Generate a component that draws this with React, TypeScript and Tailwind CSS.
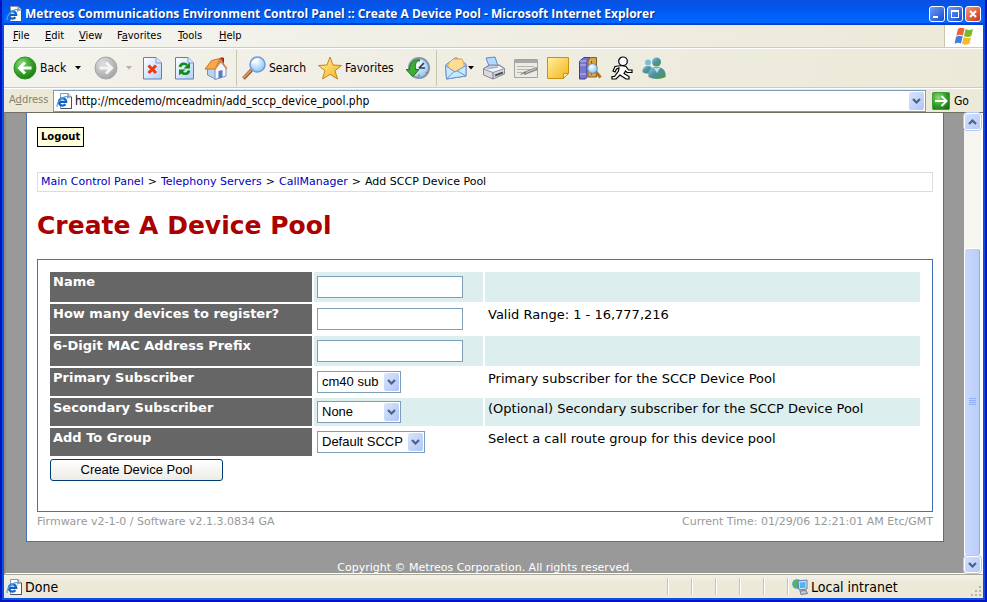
import type { ReactNode } from "react";

function Icon({ children, size = "size-6" }: { children: ReactNode; size?: string }) {
  return (
    <svg viewBox="0 0 24 24" className={`${size} shrink-0`} aria-hidden="true">
      {children}
    </svg>
  );
}

function IePageIcon() {
  return (
    <svg viewBox="0 0 16 16" className="size-4 shrink-0" aria-hidden="true">
      <path d="M4.500 .5H12L15.500 4V15.500H4.500Z" fill="#fffdf0" stroke="#8a98b8" />
      <path d="M12 .5V4H15.500" fill="#d8dff0" stroke="#5c6c94" />
      <path d="M15.500 4V15.500H4.500" fill="none" stroke="#48506c" />
      <path d="M2.800 8.800H10.200A3.700 3.700 0 1 0 9.400 11.300" fill="none" stroke="#1560c8" strokeWidth="2.200" />
      <path d="M1.500 14C-.5 11.500 5 4.500 9.500 3.600C11.500 3.200 12 4.200 11.500 5.500" fill="none" stroke="#49a4ee" strokeWidth="1.200" />
    </svg>
  );
}

function Caret({ color = "#000" }: { color?: string }) {
  return (
    <svg viewBox="0 0 6 4" className="h-1 w-1.5 shrink-0" aria-hidden="true">
      <path d="M0 0H6L3 3.500Z" fill={color} />
    </svg>
  );
}

function Chevron({ up = false }: { up?: boolean }) {
  return (
    <svg viewBox="0 0 9 6" className="h-1.5 w-[9px]" aria-hidden="true">
      <path d={up ? "M1 5L4.500 1.500L8 5" : "M1 1L4.500 4.500L8 1"} fill="none" stroke="#4d6185" strokeWidth="2.200" />
    </svg>
  );
}

const iconGradients = (
  <defs>
    <linearGradient id="page" x1="0" y1="0" x2="1" y2="1">
      <stop offset="0" stopColor="#fff" />
      <stop offset="1" stopColor="#b4d0f8" />
    </linearGradient>
    <radialGradient id="green" cx=".35" cy=".3" r=".8">
      <stop offset="0" stopColor="#8edb78" />
      <stop offset=".5" stopColor="#3aa82c" />
      <stop offset="1" stopColor="#16720f" />
    </radialGradient>
    <radialGradient id="grey" cx=".35" cy=".3" r=".8">
      <stop offset="0" stopColor="#dedede" />
      <stop offset="1" stopColor="#a0a0a0" />
    </radialGradient>
    <radialGradient id="lens" cx=".4" cy=".3" r=".8">
      <stop offset="0" stopColor="#fff" />
      <stop offset="1" stopColor="#7cbcf2" />
    </radialGradient>
    <linearGradient id="gold" x1="0" y1="0" x2="1" y2="1">
      <stop offset="0" stopColor="#fff29a" />
      <stop offset="1" stopColor="#f5b21c" />
    </linearGradient>
    <linearGradient id="people" x1="0" y1="0" x2="1" y2="1">
      <stop offset="0" stopColor="#8cc4e8" />
      <stop offset=".5" stopColor="#4d8f9c" />
      <stop offset="1" stopColor="#4b9c3c" />
    </linearGradient>
  </defs>
);

const toolbarArt: Record<string, ReactNode> = {
  back: (
    <>
      <circle cx="12" cy="12" r="11" fill="url(#green)" stroke="#2f8f28" />
      <path d="M18.500 12H7M12 6.500L6.500 12L12 17.500" fill="none" stroke="#fff" strokeWidth="3" />
    </>
  ),
  forward: (
    <>
      <circle cx="12" cy="12" r="11" fill="url(#grey)" stroke="#a6a6a6" />
      <path d="M5.500 12H17M12 6.500L17.500 12L12 17.500" fill="none" stroke="#f4f4f4" strokeWidth="3" />
    </>
  ),
  stop: (
    <>
      <path d="M3.500 1.500H16L21.500 7V23H3.500Z" fill="url(#page)" stroke="#5d7fc0" />
      <path d="M16 1.500V7H21.500" fill="#dce8fb" stroke="#7d9ad0" />
      <path d="M8.500 9.500L16 17M16 9.500L8.500 17" stroke="#ee3a10" strokeWidth="3" />
    </>
  ),
  refresh: (
    <>
      <path d="M3.500 1.500H16L21.500 7V23H3.500Z" fill="url(#page)" stroke="#5d7fc0" />
      <path d="M16 1.500V7H21.500" fill="#dce8fb" stroke="#7d9ad0" />
      <path d="M8 11C8.500 7.500 13 6.800 15 9.200M17 14.500C16.500 18 12 18.800 9.800 16.300" fill="none" stroke="#128a1a" strokeWidth="2.600" />
      <path d="M18 6.500V12.500H11.500ZM7 19.500V13.500H13.500Z" fill="#128a1a" />
    </>
  ),
  home: (
    <>
      <path d="M16.500 2H19.500V8H16.500Z" fill="#b83a22" stroke="#84301e" />
      <path d="M3.500 12L12 11V23.500L3.500 19Z" fill="#b8d2f4" stroke="#7490c4" />
      <path d="M11 13L17 6L22 12.500V20L11 23.500Z" fill="#f2f7ff" stroke="#7891c4" />
      <path d="M14.500 15L18.500 14V21.500L14.500 22.500Z" fill="#5c7cb8" />
      <path d="M1 13L7.500 4.500L16 2.500L11 13Z" fill="#f8a94c" stroke="#cc7424" />
      <path d="M11 13.500L16.500 4L23 13" fill="none" stroke="#e8873a" strokeWidth="1.500" />
    </>
  ),
  search: (
    <>
      <path d="M1.500 22.500L9.500 14" stroke="#8b4d20" strokeWidth="3.600" />
      <path d="M1.500 22L9 14" stroke="#dc9460" strokeWidth="2" />
      <circle cx="15.500" cy="8.500" r="7.500" fill="url(#lens)" stroke="#6b9cda" strokeWidth="1.500" />
      <path d="M10.500 7.500C11.500 4.500 14.500 3 17 3.500" fill="none" stroke="#fff" strokeWidth="1.800" />
    </>
  ),
  favorites: (
    <path d="M12 1L15 9L23.500 9.500L17 14.700L19.500 23L12 18.300L4.500 23L7 14.700L.5 9.500L9 9Z" fill="url(#gold)" stroke="#c9831c" strokeLinejoin="round" />
  ),
  history: (
    <>
      <circle cx="13" cy="12" r="10" fill="url(#lens)" stroke="#8096ac" strokeWidth="2" />
      <path d="M13 12L18 7M13 12H19" stroke="#2c3c54" strokeWidth="1.600" />
      <path d="M13 3.500V5.500M13 18.500V20.500M20 16L21 17" stroke="#e45a38" strokeWidth="1.600" />
      <path d="M0 13.500H3.500C3.500 6.500 9 2.500 14 4C9.500 5.500 9 9 9.500 13.500H13L6.800 20.500Z" fill="#3cae34" stroke="#1c7a1c" />
    </>
  ),
  mail: (
    <>
      <path d="M1.500 9L12 1.500L22 8V20L2.500 23Z" fill="#bccff0" stroke="#7489c8" />
      <path d="M4 8L9 3H18L20 8V12L11 16L4 12Z" fill="#ffdc94" stroke="#dda648" />
      <path d="M1.500 9.500L11 16L22 9.500V20L2.500 23Z" fill="#c6eaff" stroke="#6a93d0" />
      <path d="M2.500 23L10 15.500M22 20L13 14.800" stroke="#6a93d0" />
    </>
  ),
  print: (
    <>
      <path d="M4 2L13 1L16 10H7Z" fill="#b5d8ff" stroke="#5a88d2" />
      <path d="M1.500 12.500L7 9H17.500L22.500 12.500V18L11 23L1.500 19Z" fill="#d9d9df" stroke="#878791" />
      <path d="M1.500 13L11 16.500L22.500 12.500L17 9.500L7 10Z" fill="#f6f6f8" stroke="#92929b" />
      <path d="M11 16.500V23" stroke="#777" />
      <path d="M13 19.500L21 16.500" stroke="#4f545b" strokeWidth="2" />
      <path d="M5 12.500L16 11" stroke="#8cb5ea" strokeWidth="1.500" />
    </>
  ),
  edit: (
    <>
      <path d="M.5 3.500H23.500V21.500H.5Z" fill="#eceae2" stroke="#a4a4a2" />
      <path d="M1 4H23V7H1Z" fill="#a8a8a8" />
      <path d="M3 10.500H20M3 13.500H16M3 16.500H12" stroke="#b5b5b1" />
      <path d="M10 17.500L23 12.500" stroke="#868686" strokeWidth="3" />
      <path d="M12 16.500L22 12.700" stroke="#ccc" />
      <path d="M6.500 18.500L11 16.500" stroke="#777" />
    </>
  ),
  note: (
    <>
      <path d="M1.500 1.500H22.500V17.500L17.500 22.500H1.500Z" fill="url(#gold)" stroke="#c89116" />
      <path d="M17.500 22.500V17.500H22.500Z" fill="#fff0a6" stroke="#c89116" />
    </>
  ),
  books: (
    <>
      <path d="M1.500 5L6 1.500H12L9 5V21.500L7 23H1.500Z" fill="#7a76cc" stroke="#413d92" />
      <path d="M1.500 5H8.500M2 9H8M2 18H8" stroke="#c0c2f2" />
      <path d="M10 4L13 1.500H18.500V21H10Z" fill="#d6a64a" stroke="#855c22" />
      <path d="M13.500 5V19" stroke="#855c22" />
      <path d="M18 16L22.500 21.500" stroke="#ae7326" strokeWidth="3" />
      <circle cx="14.500" cy="12.500" r="4.800" fill="url(#lens)" stroke="#5b8cc6" />
    </>
  ),
  aim: (
    <>
      <path d="M11.500 9.500L16 10.500L18.500 14H22V16.500H17L15.500 15L14 17.500L19 20.500V23H16L10 19L6 23H2V20.500H4.500L8.500 15L9 12L6.500 13L5 16L3 15L5 10.500Z" fill="#fff" stroke="#000" strokeWidth="1.200" />
      <circle cx="13" cy="5.300" r="4.300" fill="#fff" stroke="#000" strokeWidth="1.200" />
    </>
  ),
  messenger: (
    <>
      <circle cx="6" cy="6.500" r="3" fill="#7cc0d8" />
      <path d="M.5 16C0 11 4 9.500 6.500 10C9 10 11 12 10 16C7 18 3 18 .5 16Z" fill="url(#people)" />
      <circle cx="14.500" cy="6" r="4.500" fill="url(#people)" />
      <path d="M6.500 21C5.500 13 10 11 14.500 11C20 11 24.500 14 23.500 21C19 23.500 11 23.500 6.500 21Z" fill="url(#people)" />
      <path d="M12 12L15 17L18 12Z" fill="#b6e0ea" />
    </>
  ),
};

function Tool({ name, title, className = "" }: { name: string; title: string; className?: string }) {
  return (
    <button type="button" aria-label={title} className={`flex shrink-0 items-center ${className}`}>
      <Icon>{toolbarArt[name]}</Icon>
    </button>
  );
}

function TextTool({ name, label, className }: { name: string; label: string; className: string }) {
  return (
    <button type="button" className={`flex shrink-0 items-center gap-[3px] text-left ${className}`}>
      <Icon>{toolbarArt[name]}</Icon>
      {label}
    </button>
  );
}

function Divider() {
  return <div className="h-9 w-px shrink-0 bg-[#c9c5b0]" />;
}

function TitleBar() {
  const caption =
    "flex size-4 items-center justify-center rounded-[3px] border border-white bg-linear-to-br from-[#6f9cf5] to-[#1847d2] outline-none";
  return (
    <header className="flex h-[25px] shrink-0 items-center border-b-2 border-[#0042cf] bg-linear-to-b from-[#0a4fe0] from-0% via-[#0058ee] via-40% to-[#0066ff] to-85% px-[2px] pt-1">
      <IePageIcon />
      <h1 className="ml-[3px] min-w-0 flex-1 truncate font-['Open_Sans','Noto_Sans',sans-serif] text-xs leading-4 font-bold text-white [text-shadow:1px_1px_1px_#0a2a8c]">
        Metreos Communications Environment Control Panel :: Create A Device Pool - Microsoft Internet Explorer
      </h1>
      <div className="flex gap-[2px]">
        <button type="button" aria-label="Minimize" className={caption}>
          <span className="mt-1.5 mr-1 h-0.5 w-[5px] bg-white" />
        </button>
        <button type="button" aria-label="Maximize" className={caption}>
          <span className="size-2 border border-t-2 border-white" />
        </button>
        <button
          type="button"
          aria-label="Close"
          className="flex size-4 items-center justify-center rounded-[3px] border border-white bg-linear-to-br from-[#f09878] to-[#c8300c]"
        >
          <svg viewBox="0 0 8 8" className="size-2" aria-hidden="true">
            <path d="M1 1L7 7M7 1L1 7" stroke="#fff" strokeWidth="2" />
          </svg>
        </button>
      </div>
    </header>
  );
}

const menus = [
  ["", "F", "ile", "w-8"],
  ["", "E", "dit", "w-[34px]"],
  ["", "V", "iew", "w-[38px]"],
  ["F", "a", "vorites", "w-[61px]"],
  ["", "T", "ools", "w-[41px]"],
  ["", "H", "elp", "w-8"],
];

function MenuBar() {
  return (
    <nav className="flex h-[23px] shrink-0 border-b border-[#d0ccb9] bg-linear-to-r from-[#f4f4f0] to-[#ece9d8]">
      <div className="flex flex-1 items-center pl-[9px] text-[11px] leading-4">
        {menus.map(([before, key, after, width]) => (
          <button key={after} type="button" className={`text-left ${width}`}>
            {before}
            <u>{key}</u>
            {after}
          </button>
        ))}
      </div>
      <div className="flex w-[39px] items-center justify-center border-l border-[#c9c5b0] bg-white">
        <svg viewBox="0 0 20 18" className="h-[18px] w-5" aria-hidden="true">
          <path d="M4 2C6 .5 8 .5 10.500 1.500L9 8.500C6.500 7.500 4.500 7.500 2.300 8.800Z" fill="#ec6138" />
          <path d="M11.500 2C14 3.500 16.500 3.200 19 2L17.300 9C15 10.300 12.500 10.200 10 9Z" fill="#7bb928" />
          <path d="M2 10C4 8.500 6.500 8.500 8.700 9.500L7 16.500C5 15.500 2.500 15.500 .5 17Z" fill="#3f7fe0" />
          <path d="M9.700 10C12 11.500 14.500 11.300 17 10.200L15.500 16.500C13 18 10.500 18 8 16.800Z" fill="#f7b925" />
        </svg>
      </div>
    </nav>
  );
}

function Toolbar() {
  return (
    <div className="flex h-10 shrink-0 items-center border-t border-b border-t-white border-b-[#d0ccb9] bg-linear-to-r from-[#f3f2ec] to-[#ece9d8] pl-[9px] text-xs">
      <svg className="size-0 shrink-0" aria-hidden="true">
        {iconGradients}
      </svg>
      <TextTool name="back" label="Back" className="w-[62px]" />
      <Caret />
      <Tool name="forward" title="Forward" className="ml-[13px]" />
      <div className="ml-2 flex">
        <Caret color="#b5b2a4" />
      </div>
      <div className="mx-2 flex gap-2">
        <Tool name="stop" title="Stop" />
        <Tool name="refresh" title="Refresh" />
        <Tool name="home" title="Home" />
      </div>
      <Divider />
      <TextTool name="search" label="Search" className="ml-[5px] w-[76px]" />
      <TextTool name="favorites" label="Favorites" className="w-[88px]" />
      <Tool name="history" title="History" className="mr-1.5" />
      <Divider />
      <Tool name="mail" title="Mail" className="ml-[7px]" />
      <Caret />
      <div className="ml-2 flex gap-2">
        <Tool name="print" title="Print" />
        <Tool name="edit" title="Edit" />
        <Tool name="note" title="Notes" />
        <Tool name="books" title="Research" />
        <Tool name="aim" title="AIM" />
        <Tool name="messenger" title="Messenger" />
      </div>
    </div>
  );
}

function AddressBar() {
  return (
    <form className="flex h-6 shrink-0 items-center border-t border-white bg-[#ece9d8]" onSubmit={(e) => e.preventDefault()}>
      <label htmlFor="address" className="w-[49px] pl-[5px] text-[11px] text-[#85836f]">
        A<u>d</u>dress
      </label>
      <div className="flex h-[22px] min-w-0 flex-1 items-center border border-[#7f9db9] bg-white pr-px pl-0.5">
        <IePageIcon />
        <input
          id="address"
          className="ml-[3px] min-w-0 flex-1 text-xs outline-none"
          defaultValue="http://mcedemo/mceadmin/add_sccp_device_pool.php"
        />
        <button type="button" aria-label="Show addresses" className="flex h-[18px] w-[15px] items-center justify-center rounded-xs bg-linear-to-br from-[#dae5fd] to-[#aec5f5]">
          <Chevron />
        </button>
      </div>
      <button type="submit" className="flex w-[57px] items-center gap-1 pl-1.5 text-xs">
        <svg viewBox="0 0 18 18" className="size-[18px]" aria-hidden="true">
          <rect x=".5" y=".5" width="17" height="17" rx="1" fill="url(#green)" stroke="#3f9e3c" />
          <path d="M3 9H14M9.500 4L14.500 9L9.500 14" fill="none" stroke="#fff" strokeWidth="2" />
        </svg>
        Go
      </button>
    </form>
  );
}

function PickList({ id, options, width }: { id: string; options: string[]; width: string }) {
  return (
    <div className={`relative ${width}`}>
      <select id={id} className="block h-[22px] w-full appearance-none border border-[#7f9db9] bg-white pl-1 font-['Liberation_Sans',Arial,sans-serif] text-[13px] leading-5 outline-none">
        {options.map((option) => (
          <option key={option}>{option}</option>
        ))}
      </select>
      <span className="pointer-events-none absolute top-0.5 right-0.5 flex h-[18px] w-[15px] items-center justify-center rounded-xs bg-linear-to-br from-[#dae5fd] to-[#aec5f5]">
        <Chevron />
      </span>
    </div>
  );
}

type Field = { id: string; label: string; note: string; options?: string[]; width?: string };

const fields: Field[] = [
  { id: "name", label: "Name", note: "" },
  { id: "count", label: "How many devices to register?", note: "Valid Range: 1 - 16,777,216" },
  { id: "mac", label: "6-Digit MAC Address Prefix", note: "" },
  { id: "primary", label: "Primary Subscriber", note: "Primary subscriber for the SCCP Device Pool", options: ["cm40 sub"], width: "w-[84px]" },
  { id: "secondary", label: "Secondary Subscriber", note: "(Optional) Secondary subscriber for the SCCP Device Pool", options: ["None"], width: "w-[84px]" },
  { id: "group", label: "Add To Group", note: "Select a call route group for this device pool", options: ["Default SCCP"], width: "w-[108px]" },
];

function FieldRow({ field, shaded }: { field: Field; shaded: boolean }) {
  const tint = shaded ? "bg-[#dceeed]" : "bg-white";
  return (
    <div className={`grid grid-cols-[262px_169px_1fr] gap-0.5 ${field.options ? "h-7" : "h-[30px]"}`}>
      <label htmlFor={field.id} className="bg-[#666] px-[3px] pt-0.5 text-[13px] leading-4 font-bold text-white">
        {field.label}
      </label>
      <div className={`${tint} px-[3px] ${field.options ? "pt-[3px]" : "pt-1"}`}>
        {field.options ? (
          <PickList id={field.id} options={field.options} width={field.width ?? ""} />
        ) : (
          <input id={field.id} type="text" className="block h-[22px] w-[146px] border border-[#7f9db9] bg-white px-1 text-[13px] outline-none" />
        )}
      </div>
      <p className={`${tint} px-[3px] pt-[3px] text-[13px] leading-4`}>{field.note}</p>
    </div>
  );
}

function Page() {
  return (
    <main className="min-w-0 flex-1 overflow-hidden bg-[#999] px-5 font-['DejaVu_Sans',Verdana,sans-serif] text-black">
      <div className="border-x border-b border-[#4273b9] bg-white px-2.5 pt-3.5 pb-[11px]">
        <button type="button" className="block h-5 border border-black bg-[#ffffdd] px-[3px] text-[10px] leading-4 font-bold">
          Logout
        </button>
        <nav className="mt-[25px] flex h-5 items-center gap-1 border border-[#ddd] px-[3px] text-[11px]">
          <a href="#main" className="text-[#0000bb]">Main Control Panel</a>
          <span>&gt;</span>
          <a href="#telephony" className="text-[#0000bb]">Telephony Servers</a>
          <span>&gt;</span>
          <a href="#callmanager" className="text-[#0000bb]">CallManager</a>
          <span>&gt;</span>
          <span>Add SCCP Device Pool</span>
        </nav>
        <h2 className="mt-[18px] text-[25px] leading-8 font-bold text-[#aa0000]">Create A Device Pool</h2>
        <form className="mt-[17px] h-[253px] border border-[#4273b9] px-3 pt-3" onSubmit={(e) => e.preventDefault()}>
          <div className="flex flex-col gap-0.5">
            {fields.map((field, index) => (
              <FieldRow key={field.id} field={field} shaded={index % 2 === 0} />
            ))}
          </div>
          <button
            type="submit"
            className="mt-[3px] block h-[22px] w-[173px] rounded-[3px] border border-[#003c74] bg-linear-to-b from-white to-[#ecebe5] font-['Liberation_Sans',Arial,sans-serif] text-[13px] leading-5"
          >
            Create Device Pool
          </button>
        </form>
        <div className="flex justify-between pt-0.5 text-[11px] leading-4 text-[#999]">
          <span>Firmware v2-1-0 / Software v2.1.3.0834 GA</span>
          <span>Current Time: 01/29/06 12:21:01 AM Etc/GMT</span>
        </div>
      </div>
      <p className="pt-5 text-center text-[11px] leading-3 text-white">Copyright © Metreos Corporation. All rights reserved.</p>
    </main>
  );
}

function ScrollBar() {
  const cap = "flex h-[17px] shrink-0 items-center justify-center rounded-[3px] border border-white bg-linear-to-br from-[#d3e0fd] to-[#b4c9f7] outline outline-[-1px] outline-[#b4c8f0]";
  return (
    <div className="flex w-[17px] shrink-0 flex-col bg-[#f6f5f0]">
      <button type="button" aria-label="Scroll up" className={cap}>
        <Chevron up />
      </button>
      <div className="flex-[118]" />
      <div className="flex flex-[307] flex-col items-center justify-center gap-px rounded-[3px] border border-white bg-linear-to-r from-[#c9d8fc] to-[#b9cdfa] shadow-[inset_-1px_0_0_#90aee8]">
        <span className="h-px w-[7px] bg-[#8cb0f8]" />
        <span className="h-px w-[7px] bg-[#8cb0f8]" />
        <span className="h-px w-[7px] bg-[#8cb0f8]" />
        <span className="h-px w-[7px] bg-[#8cb0f8]" />
      </div>
      <button type="button" aria-label="Scroll down" className={cap}>
        <Chevron />
      </button>
    </div>
  );
}

function StatusBar() {
  return (
    <footer className="flex h-6 shrink-0 items-center border-t border-[#aca899] bg-linear-to-b from-[#f3f2e8] to-[#ece9d8] to-30% pl-0.5 text-sm">
      <IePageIcon />
      <span className="ml-[3px] flex-1">Done</span>
      {[0, 1, 2, 3, 4].map((pane) => (
        <span key={pane} className="h-[17px] w-6 border-l border-[#c9c5b3] shadow-[inset_1px_0_0_#fff]" />
      ))}
      <span className="flex h-[17px] w-[184px] items-center gap-[3px] border-l border-[#c9c5b3] pl-1 shadow-[inset_1px_0_0_#fff]">
        <svg viewBox="0 0 16 16" className="size-4 shrink-0" aria-hidden="true">
          <circle cx="5" cy="5" r="4.800" fill="#3e9edc" />
          <path d="M1 3L5 .5L7 3L4 6L5 9L2 8Z" fill="#55b846" />
          <path d="M6 2L15 1V10L7 11Z" fill="#dce8f6" stroke="#5d7eaa" />
          <path d="M7.500 3.500L13.500 2.700V8.700L8 9.300Z" fill="#54b2f2" />
          <path d="M8 12L14 11.500L15.500 14.500L9 15.500Z" fill="#c9cedb" stroke="#6e7684" />
        </svg>
        Local intranet
      </span>
      <svg viewBox="0 0 12 12" className="size-3 self-end" aria-hidden="true">
        <path d="M8 0h2v2h-2zM4 4h2v2h-2zM8 4h2v2h-2zM0 8h2v2h-2zM4 8h2v2h-2zM8 8h2v2h-2z" fill="#bab6a5" />
      </svg>
    </footer>
  );
}

export default function App() {
  return (
    <div className="flex h-screen flex-col overflow-hidden border-x-2 border-b-2 border-[#0014c0] bg-[#0a50e6] font-['DejaVu_Sans_Condensed',Tahoma,sans-serif] text-black">
      <div className="flex min-h-0 flex-1 flex-col px-0.5 pb-0.5">
        <TitleBar />
        <MenuBar />
        <Toolbar />
        <AddressBar />
        <div className="flex min-h-0 flex-1 border-t border-b border-l-2 border-t-[#716f64] border-b-white border-l-[#8f8c7d] bg-white pr-0.5">
          <Page />
          <ScrollBar />
        </div>
        <StatusBar />
      </div>
    </div>
  );
}
